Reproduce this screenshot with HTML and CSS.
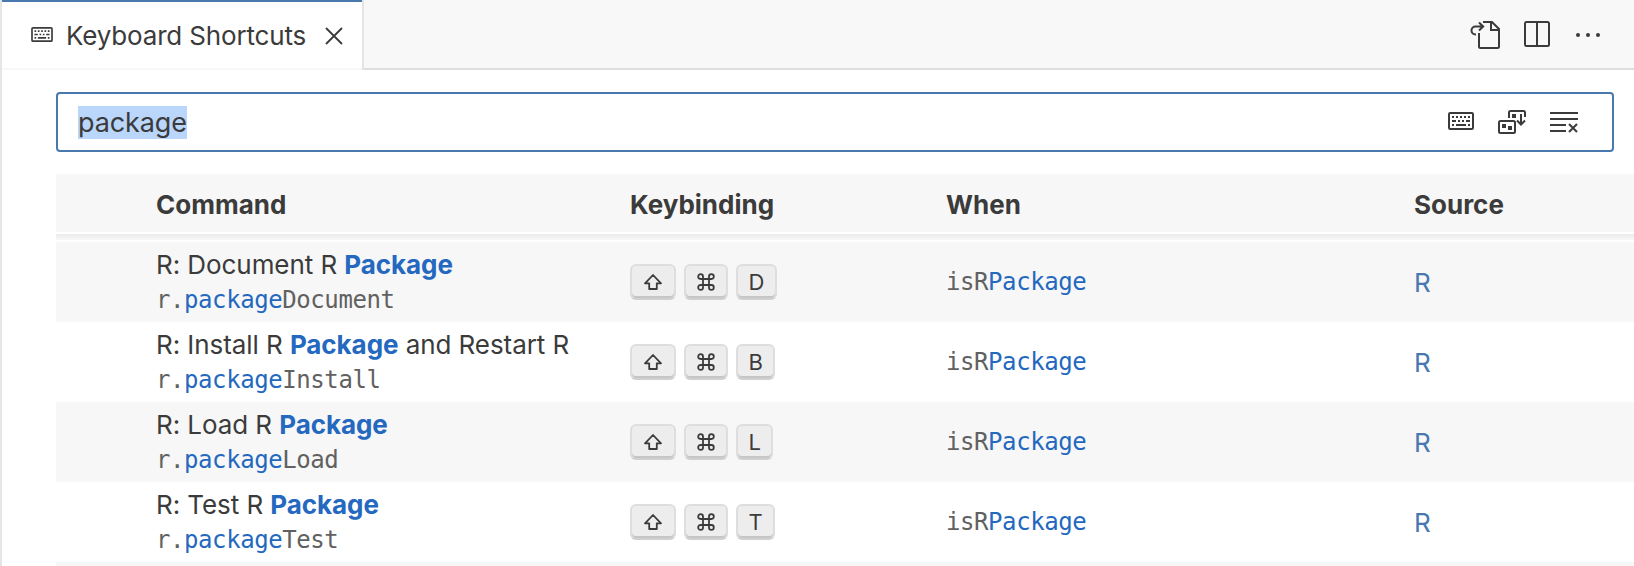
FILE: index.html
```
<!DOCTYPE html>
<html lang="en">
<head>
<meta charset="utf-8">
<title>Keyboard Shortcuts</title>
<link rel="stylesheet" href="styles.css">
</head>
<body>
<svg class="defs" width="0" height="0">
  <defs>
    <symbol id="keyboard" viewBox="0 0 26 18">
      <rect x="1" y="1" width="24" height="16" rx="1.2" fill="none" stroke="currentColor" stroke-width="2"/>
      <path fill="currentColor" d="M4 4h2v2H4zM8 4h2v2H8zM12 4h2v2h-2zM16 4h2v2h-2zM20 4h2v2h-2zM4 8h4v2H4zM10 8h2v2h-2zM14 8h2v2h-2zM18 8h4v2h-4zM4 12h2v2H4zM8 12h10v2H8zM20 12h2v2h-2z"/>
    </symbol>
    <symbol id="shift" viewBox="0 0 18 16">
      <path d="M9 1L17 9.3H12.8V15H5.2V9.3H1Z" fill="none" stroke="currentColor" stroke-width="1.8" stroke-linejoin="round"/>
    </symbol>
    <symbol id="command" viewBox="0 0 18 18">
      <path d="M6 6H3.6A2.4 2.4 0 1 1 6 3.6V14.4A2.4 2.4 0 1 1 3.6 12H14.4A2.4 2.4 0 1 1 12 14.4V3.6A2.4 2.4 0 1 1 14.4 6Z" fill="none" stroke="currentColor" stroke-width="1.8"/>
    </symbol>
  </defs>
</svg>
<div class="editor">
  <header class="tabs">
    <div class="tab">
      <svg class="tab-icon"><use href="#keyboard"/></svg>
      <span class="tab-label">Keyboard Shortcuts</span>
      <svg class="close" viewBox="0 0 18 18"><path d="M1 1L17 17M17 1L1 17" stroke="currentColor" stroke-width="1.8"/></svg>
    </div>
    <div class="actions">
      <svg width="30" height="28" viewBox="0 0 30 28" fill="none" stroke="currentColor" stroke-width="2">
        <path d="M13 1h9l7 7v17.500a1.500 1.500 0 0 1-1.500 1.500H10.500A1.500 1.500 0 0 1 9 25.500V12M21 1v8h8"/>
        <path d="M6 13.500H5.500A4 4 0 0 1 5.500 5.500H13M9 1.500L13.200 5.500L9 9.500"/>
      </svg>
      <svg width="26" height="26" viewBox="0 0 26 26" fill="none" stroke="currentColor" stroke-width="2">
        <rect x="1" y="1" width="24" height="24" rx="1.500"/><path d="M13 1v24"/>
      </svg>
      <svg width="24" height="26" viewBox="0 0 24 26" fill="currentColor"><circle cx="2" cy="14" r="2"/><circle cx="12" cy="14" r="2"/><circle cx="22" cy="14" r="2"/></svg>
    </div>
  </header>
  <main class="body">
    <div class="search">
      <span class="query">package</span>
      <div class="search-actions">
        <svg class="record"><use href="#keyboard"/></svg>
        <svg width="28" height="24" viewBox="0 0 28 24" fill="none" stroke="currentColor" stroke-width="2">
          <path d="M11 8V2.500A1.500 1.500 0 0 1 12.500 1h13A1.500 1.500 0 0 1 27 2.500V7"/>
          <rect x="1" y="11" width="16" height="12" rx="1.500"/>
          <path d="M23 4v10M19 10.500L23 14.500L27 10.500"/>
          <path fill="currentColor" stroke="none" d="M4 14h4v4H4zM10 16h4v4h-4zM14 4h4v4h-4z"/>
        </svg>
        <svg width="28" height="21" viewBox="0 0 28 21" fill="none" stroke="currentColor" stroke-width="2">
          <path d="M0 1h28M0 7h28M0 13h16M0 19h16M19 12l8 8M27 12l-8 8"/>
        </svg>
      </div>
    </div>
    <div class="table">
      <div class="row head"><span class="h-command">Command</span><span class="h-key">Keybinding</span><span class="h-when">When</span><span class="h-source">Source</span></div>
      <div class="shadow"></div>
      <div class="row odd">
        <div class="command"><div class="title">R: Document R <b>Package</b></div><div class="mono">r.<em>package</em>Document</div></div>
        <div class="keys"><kbd class="k-shift"><svg><use href="#shift"/></svg></kbd><kbd class="k-cmd"><svg><use href="#command"/></svg></kbd><kbd>D</kbd></div>
        <div class="mono when">isR<em>Package</em></div><a class="source">R</a>
      </div>
      <div class="row">
        <div class="command"><div class="title">R: Install R <b>Package</b> and Restart R</div><div class="mono">r.<em>package</em>Install</div></div>
        <div class="keys"><kbd class="k-shift"><svg><use href="#shift"/></svg></kbd><kbd class="k-cmd"><svg><use href="#command"/></svg></kbd><kbd>B</kbd></div>
        <div class="mono when">isR<em>Package</em></div><a class="source">R</a>
      </div>
      <div class="row odd">
        <div class="command"><div class="title">R: Load R <b>Package</b></div><div class="mono">r.<em>package</em>Load</div></div>
        <div class="keys"><kbd class="k-shift"><svg><use href="#shift"/></svg></kbd><kbd class="k-cmd"><svg><use href="#command"/></svg></kbd><kbd>L</kbd></div>
        <div class="mono when">isR<em>Package</em></div><a class="source">R</a>
      </div>
      <div class="row">
        <div class="command"><div class="title">R: Test R <b>Package</b></div><div class="mono">r.<em>package</em>Test</div></div>
        <div class="keys"><kbd class="k-shift"><svg><use href="#shift"/></svg></kbd><kbd class="k-cmd"><svg><use href="#command"/></svg></kbd><kbd>T</kbd></div>
        <div class="mono when">isR<em>Package</em></div><a class="source">R</a>
      </div>
      <div class="row odd"></div>
    </div>
  </main>
</div>
</body>
</html>
```

FILE: styles.css
```
* { box-sizing: border-box; }
body { margin: 0; background: #fff; color: #3b3b3b; font: 26px/34px Inter, sans-serif; letter-spacing: -0.07px; }
svg { display: block; flex: none; }
.defs { position: absolute; }
.editor { height: 566px; overflow: hidden; border-left: 2px solid #e5e5e5; }
.tabs { display: flex; justify-content: space-between; height: 70px; background: linear-gradient(#f8f8f8 68px, #dedede 68px); }
.tab { display: flex; align-items: center; width: 362px; height: 70px; padding: 2px 0 0 29px; border-right: 2px solid #e5e5e5; background: linear-gradient(#4878ae 2px, #fff 2px, #fff 68px, #f8f8f8 68px); }
.tab-icon { width: 22px; height: 15px; margin-top: -3px; }
.tab-label { width: 241px; margin-left: 13px; letter-spacing: -0.17px; white-space: nowrap; }
.close { width: 18px; height: 18px; margin: -1px 0 0 18px; }
.actions { display: flex; align-items: center; gap: 26px; padding: 0 34px 2px 0; }
.actions svg:first-child { margin: 2px -2px 0 0; }
.body { padding: 22px 0 0 54px; }
.search { display: flex; align-items: center; justify-content: space-between; width: 1558px; height: 60px; padding: 0 34px 0 20px; border: 2px solid #4878ae; border-radius: 4px; }
.query { height: 33px; font-size: 27px; line-height: 34px; letter-spacing: -0.1px; background: #bad6fb; }
.search-actions { display: flex; align-items: center; gap: 24px; }
.record { width: 26px; height: 18px; margin-bottom: 2px; }
.table { margin-top: 22px; }
.row { display: grid; grid-template-columns: 474px 316px 468px 1fr; align-items: center; height: 80px; padding-left: 100px; }
.odd, .head { background: #f7f7f7; }
.head { height: 58px; padding-top: 3px; font-weight: 700; letter-spacing: 0; }
.shadow { height: 6px; margin: 2px 0; background: linear-gradient(#ececec, #f8f8f8); }
.title { height: 34px; white-space: nowrap; }
b { font-weight: 700; }
b, em { color: #2468c0; font-style: normal; }
.mono { font: 24px/34px "DejaVu Sans Mono", monospace; letter-spacing: -0.42px; color: #616161; white-space: nowrap; }
.command .mono { height: 34px; line-height: 36px; }
.keys { display: flex; gap: 8px; }
kbd { display: flex; align-items: center; justify-content: center; height: 36px; padding: 0 10.5px; border: 2px solid #dedede; border-bottom-color: #d0d0d0; border-radius: 6px; background: #ededed; box-shadow: inset 0 -2px 0 #c6c6c6; font: 22px/30px Inter, sans-serif; }
.k-shift { width: 46px; }
.k-cmd { width: 44px; }
.k-shift svg { width: 18px; height: 16px; }
.k-cmd svg { width: 18px; height: 18px; }
.source { padding-top: 1px; color: #4878ae; }
```
